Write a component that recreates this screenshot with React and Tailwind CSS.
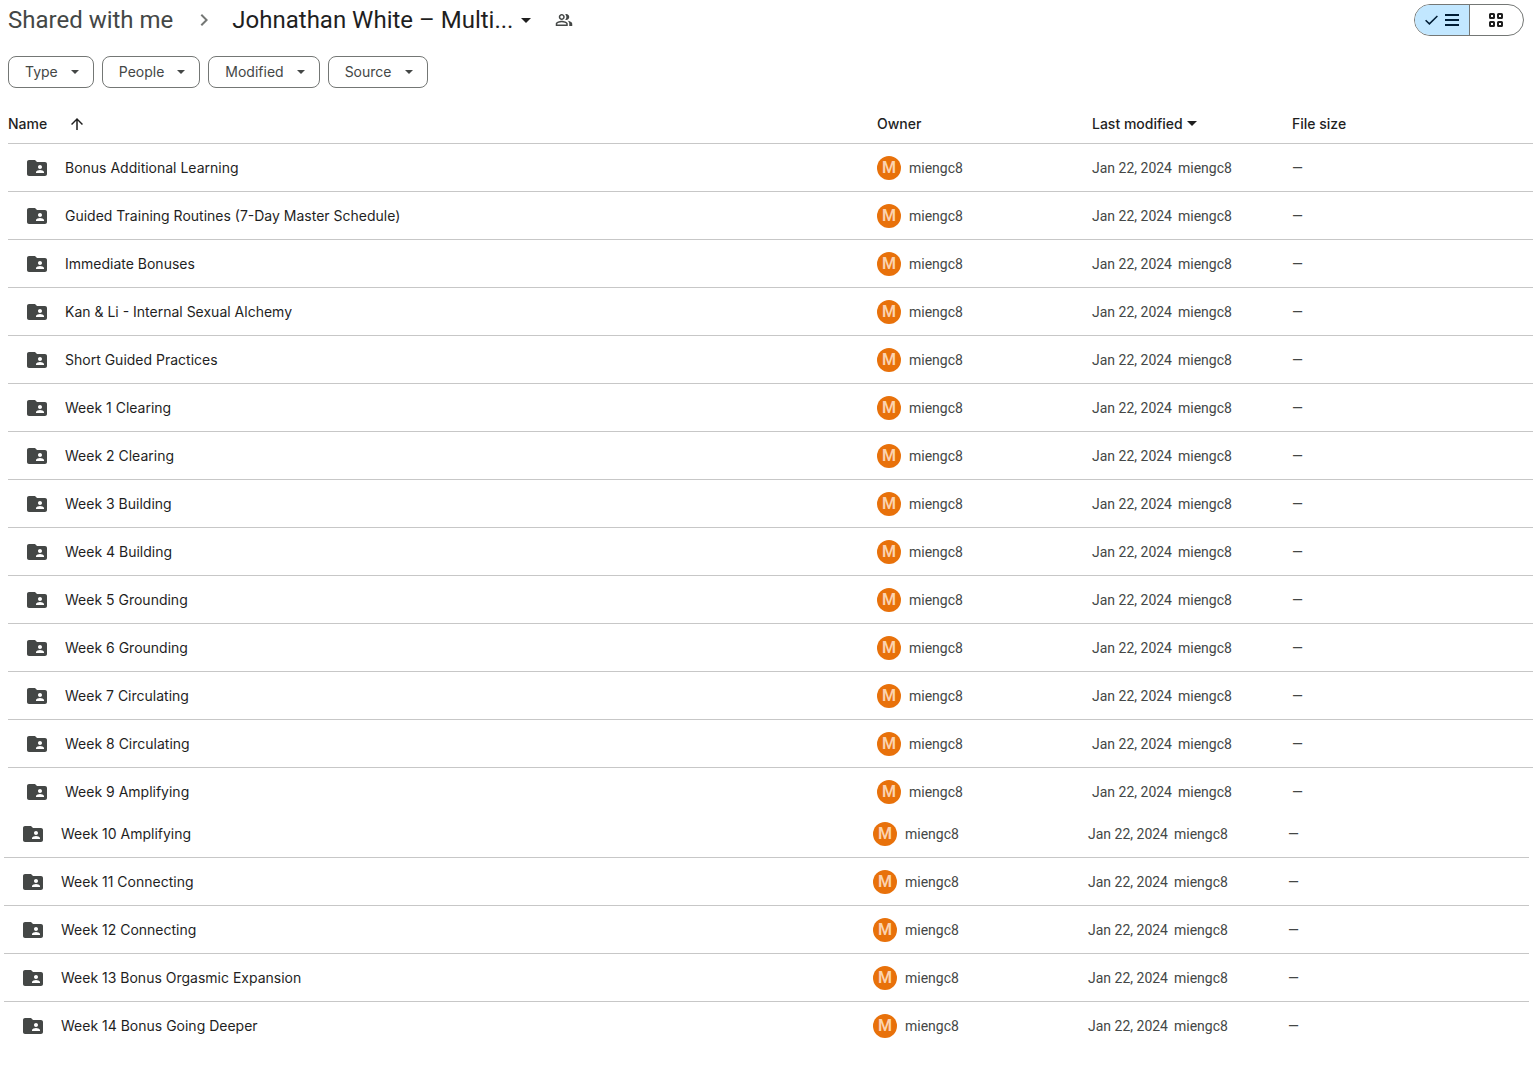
import { useState } from 'react';
import { MdArrowUpward, MdChevronRight, MdFolderShared, MdOutlinePeopleAlt } from 'react-icons/md';

const FILTERS = ['Type', 'People', 'Modified', 'Source'];

const FOLDERS = [
    'Bonus Additional Learning',
    'Guided Training Routines (7-Day Master Schedule)',
    'Immediate Bonuses',
    'Kan & Li - Internal Sexual Alchemy',
    'Short Guided Practices',
    'Week 1 Clearing',
    'Week 2 Clearing',
    'Week 3 Building',
    'Week 4 Building',
    'Week 5 Grounding',
    'Week 6 Grounding',
    'Week 7 Circulating',
    'Week 8 Circulating',
    'Week 9 Amplifying',
];

const MORE_FOLDERS = [
    'Week 10 Amplifying',
    'Week 11 Connecting',
    'Week 12 Connecting',
    'Week 13 Bonus Orgasmic Expansion',
    'Week 14 Bonus Going Deeper',
];

function Caret({ className }) {
    return (
        <svg viewBox="0 0 10 5" className={className} fill="currentColor" aria-hidden="true">
            <path d="M0 0h10L5 5z" />
        </svg>
    );
}

function Columns() {
    return (
        <colgroup>
            <col />
            <col className="w-[215px]" />
            <col className="w-[200px]" />
            <col className="w-[241px]" />
        </colgroup>
    );
}

function FolderRow({ name, cell }) {
    return (
        <tr className="text-[#444746]">
            <td className={cell}>
                <div className="flex items-center gap-4 pl-[17px]">
                    <MdFolderShared size={24} className="shrink-0" />
                    <a href="#" className="truncate font-[Inter,sans-serif] text-[#1f1f1f]">{name}</a>
                </div>
            </td>
            <td className={cell}>
                <div className="flex items-center gap-2">
                    <span className="flex size-6 items-center justify-center rounded-full bg-[#e8710a] text-base font-semibold text-[#fbd3b0]">
                        M
                    </span>
                    miengc8
                </div>
            </td>
            <td className={cell}>
                <div className="flex gap-[6px]">
                    <span>Jan 22, 2024</span>
                    <span>miengc8</span>
                </div>
            </td>
            <td className={cell}>—</td>
        </tr>
    );
}

export default function App() {
    const [view, setView] = useState('list');

    return (
        <div className="min-h-screen bg-white pt-1 font-[Roboto,sans-serif] text-sm text-[#1f1f1f]">
            <header className="flex items-center justify-between pr-[15px] pl-2">
                <nav className="flex items-center text-2xl leading-8">
                    <a href="#" className="text-[#444746]">Shared with me</a>
                    <MdChevronRight size={24} className="mr-4 ml-[19px] text-[#747775]" />
                    <button className="flex items-center gap-2">
                        Johnathan White – Multi...
                        <Caret className="h-[5px] w-[10px]" />
                    </button>
                    <button aria-label="Manage access" className="ml-6 text-[#444746]">
                        <MdOutlinePeopleAlt size={18} />
                    </button>
                </nav>
                <div className="flex h-8 overflow-hidden rounded-full border border-[#747775]">
                    <button
                        aria-label="List layout"
                        onClick={() => setView('list')}
                        className={`flex w-[54px] items-center justify-center gap-[7px] ${view === 'list' ? 'bg-[#c2e7ff]' : ''}`}
                    >
                        {view === 'list' && (
                            <svg width="13" height="10" viewBox="0 0 13 10" fill="none" stroke="#001d35" strokeWidth="1.5">
                                <path d="M.6 5.2 4.4 8.9 12.4 1" />
                            </svg>
                        )}
                        <svg width="14" height="12" viewBox="0 0 14 12" fill="#001d35">
                            <path d="M0 0h14v2H0zM0 5h14v2H0zM0 10h14v2H0z" />
                        </svg>
                    </button>
                    <button
                        aria-label="Grid layout"
                        onClick={() => setView('grid')}
                        className={`flex w-[54px] items-center justify-center border-l border-[#747775] pr-0.5 ${view === 'grid' ? 'bg-[#c2e7ff]' : ''}`}
                    >
                        <svg width="14" height="14" viewBox="0 0 14 14" fill="none" stroke="#1f1f1f" strokeWidth="2">
                            <rect x="1" y="1" width="4" height="4" rx=".5" />
                            <rect x="9" y="1" width="4" height="4" rx=".5" />
                            <rect x="1" y="9" width="4" height="4" rx=".5" />
                            <rect x="9" y="9" width="4" height="4" rx=".5" />
                        </svg>
                    </button>
                </div>
            </header>

            <div className="mt-5 flex gap-2 pl-2">
                {FILTERS.map((label) => (
                    <button
                        key={label}
                        className="flex h-8 items-center gap-[13px] rounded-lg border border-[#747775] pr-[14px] pl-4 font-[Inter,sans-serif] text-[#444746]"
                    >
                        {label}
                        <Caret className="h-1 w-2" />
                    </button>
                ))}
            </div>

            <main className="mt-4">
                <div className="pr-[6px] pl-2">
                    <table className="w-full table-fixed border-separate border-spacing-0 text-left">
                        <Columns />
                        <thead className="font-[Inter,sans-serif]">
                            <tr>
                                <th className="h-10 border-b border-[#c7c7c7] p-0 font-medium">
                                    <button className="flex items-center gap-[21px]">
                                        Name
                                        <MdArrowUpward size={18} />
                                    </button>
                                </th>
                                <th className="h-10 border-b border-[#c7c7c7] p-0 font-medium">Owner</th>
                                <th className="h-10 border-b border-[#c7c7c7] p-0 font-medium">
                                    <button className="flex items-center gap-1">
                                        Last modified
                                        <Caret className="h-[5px] w-[10px]" />
                                    </button>
                                </th>
                                <th className="h-10 border-b border-[#c7c7c7] p-0 font-medium">File size</th>
                            </tr>
                        </thead>
                        <tbody>
                            {FOLDERS.map((name, i) => (
                                <FolderRow
                                    key={name}
                                    name={name}
                                    cell={i === FOLDERS.length - 1 ? 'h-12 p-0' : 'h-12 border-b border-[#c7c7c7] p-0'}
                                />
                            ))}
                        </tbody>
                    </table>
                </div>

                <div className="pr-[10px] pl-1">
                    <table aria-label="More folders" className="w-full table-fixed border-separate border-spacing-0 text-left">
                        <Columns />
                        <tbody>
                            {MORE_FOLDERS.map((name, i) => (
                                <FolderRow
                                    key={name}
                                    name={name}
                                    cell={
                                        i === 0
                                            ? 'h-[42px] border-b border-[#c7c7c7] p-0 pb-[6px]'
                                            : i === MORE_FOLDERS.length - 1
                                              ? 'h-12 p-0'
                                              : 'h-12 border-b border-[#c7c7c7] p-0'
                                    }
                                />
                            ))}
                        </tbody>
                    </table>
                </div>
            </main>
        </div>
    );
}
